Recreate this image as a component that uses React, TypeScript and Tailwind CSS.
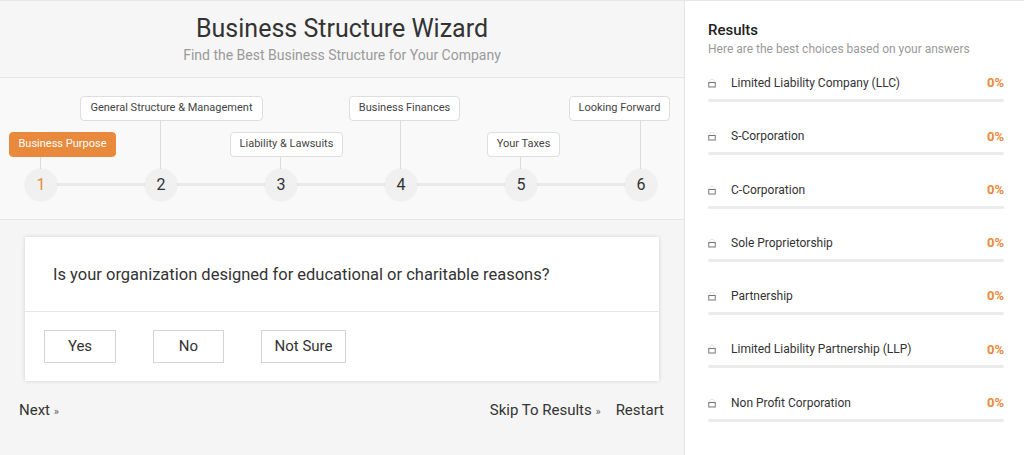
import React from 'react';

type Step = { n: number; label: string; left: string; width: string; top: string; active?: boolean };

const steps: Step[] = [
  { n: 1, label: 'Business Purpose', left: 'left-[-16px]', width: 'w-[107px]', top: 'top-[-37px]', active: true },
  { n: 2, label: 'General Structure & Management', left: 'left-[-65px]', width: 'w-[183px]', top: 'top-[-73px]' },
  { n: 3, label: 'Liability & Lawsuits', left: 'left-[-35px]', width: 'w-[113px]', top: 'top-[-37px]' },
  { n: 4, label: 'Business Finances', left: 'left-[-36px]', width: 'w-[111px]', top: 'top-[-73px]' },
  { n: 5, label: 'Your Taxes', left: 'left-[-18px]', width: 'w-[73px]', top: 'top-[-37px]' },
  { n: 6, label: 'Looking Forward', left: 'left-[-56px]', width: 'w-[101px]', top: 'top-[-73px]' },
];

const results = [
  'Limited Liability Company (LLC)',
  'S-Corporation',
  'C-Corporation',
  'Sole Proprietorship',
  'Partnership',
  'Limited Liability Partnership (LLP)',
  'Non Profit Corporation',
];

function Lock() {
  return (
    <svg width="8" height="10" viewBox="0 0 8 10" className="shrink-0">
      <path d="M2 4.5V3a2 2 0 0 1 4 0v1.5" fill="none" stroke="#e3e3e3" strokeWidth="1" />
      <rect x="0.75" y="4.5" width="6.5" height="4.5" fill="#fff" stroke="#777" strokeWidth="1" />
    </svg>
  );
}

function StepNode({ step }: { step: Step }) {
  // connector height depends on label row
  const tall = step.top === 'top-[-73px]';
  return (
    <div className="relative w-8 h-8">
      <div className={`absolute ${step.top} ${step.left} ${step.width}`}>
        <div
          className={`h-[25px] flex items-center justify-center rounded-[4px] text-[11px] whitespace-nowrap ${
            step.active ? 'bg-[#e8893b] text-white border border-[#e8893b]' : 'bg-white text-[#444] border border-[#dedede]'
          }`}
        >
          {step.label}
        </div>
      </div>
      <div className={`absolute left-[15px] w-px bg-[#dcdcdc] ${tall ? 'top-[-49px] h-[49px]' : 'top-[-12px] h-[12px]'}`} />
      <div
        className={`relative z-10 w-8 h-8 rounded-full bg-[#f0f0f0] shadow-[0_0_2px_rgba(0,0,0,0.08)] flex items-center justify-center text-[16px] ${
          step.active ? 'text-[#e8893b]' : 'text-[#333]'
        }`}
      >
        {step.n}
      </div>
    </div>
  );
}

export default function App() {
  return (
    <div className="w-[1024px] h-[455px] flex overflow-hidden font-['Roboto','Liberation_Sans',sans-serif]">
      {/* Wizard column */}
      <div className="w-[685px] shrink-0 flex flex-col bg-[#f5f5f5] border-r border-[#e4e4e4]">
        <header className="h-[78px] bg-[#f6f6f6] border-t border-b border-[#e6e6e6] flex flex-col items-center pt-[12px]">
          <h1 className="text-[25px] leading-[32px] text-[#333] font-normal">Business Structure Wizard</h1>
          <p className="text-[14px] leading-[18px] text-[#9a9a9a] mt-[1px]">Find the Best Business Structure for Your Company</p>
        </header>

        <div className="h-[142px] bg-[#f9f9f9] border-b border-[#e6e6e6] relative pt-[91px]">
          <div className="relative flex justify-between pl-[25px] pr-[27px]">
            <div className="absolute left-[41px] right-[43px] top-[14px] h-[3px] bg-[#e9e9e9]" />
            {steps.map((s) => (
              <StepNode key={s.n} step={s} />
            ))}
          </div>
        </div>

        <div className="px-[25px] pt-[17px]">
          <div className="bg-white shadow-[0_0_4px_rgba(0,0,0,0.15)]">
            <div className="h-[75px] border-b border-[#e6e6e6] flex items-center pl-[28px] pt-[2px]">
              <p className="text-[16.5px] text-[#333]">Is your organization designed for educational or charitable reasons?</p>
            </div>
            <div className="h-[69px] flex items-start gap-[37px] pl-[19px] pt-[18px]">
              <button className="w-[72px] h-[33px] border border-[#d4d4d4] text-[15px] text-[#333]">Yes</button>
              <button className="w-[71px] h-[33px] border border-[#d4d4d4] text-[15px] text-[#333]">No</button>
              <button className="w-[85px] h-[33px] border border-[#d4d4d4] text-[15px] text-[#333]">Not Sure</button>
            </div>
          </div>
        </div>

        <div className="flex items-center justify-between pl-[19px] pr-[20px] mt-[18px] text-[15px] text-[#333]">
          <span>
            Next <span className="text-[11px] text-[#666]">»</span>
          </span>
          <div className="flex items-center gap-[15px]">
            <span>
              Skip To Results <span className="text-[11px] text-[#666]">»</span>
            </span>
            <span>Restart</span>
          </div>
        </div>
      </div>

      {/* Results column */}
      <aside className="flex-1 bg-white border-t border-[#e6e6e6] pl-[23px] pr-[20px] pt-[20px]">
        <h2 className="text-[15px] leading-[18px] font-medium text-[#222]">Results</h2>
        <p className="text-[12px] leading-[16px] text-[#9a9a9a] mt-[2px]">Here are the best choices based on your answers</p>
        <ul className="mt-[9px] flex flex-col">
          {results.map((r) => (
            <li key={r} className="h-[53.3px] pt-[8px]">
              <div className="flex items-center h-[18px]">
                <Lock />
                <span className="ml-[15px] text-[12px] text-[#333] flex-1">{r}</span>
                <span className="text-[13px] font-bold text-[#e8893b]">0%</span>
              </div>
              <div className="mt-[7px] h-[3px] bg-[#ebebeb] rounded-full" />
            </li>
          ))}
        </ul>
      </aside>
    </div>
  );
}
